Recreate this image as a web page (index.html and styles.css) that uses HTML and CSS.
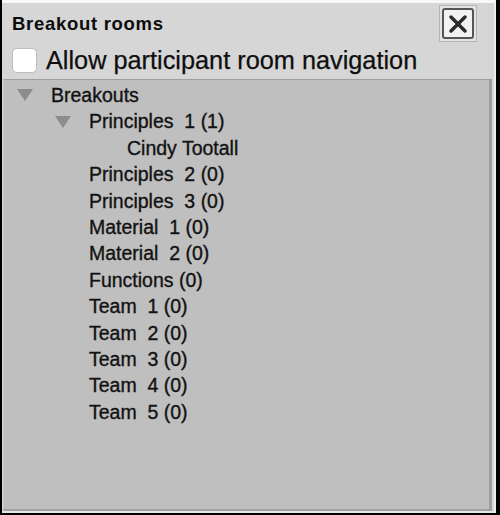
FILE: index.html
```html
<!DOCTYPE html>
<html>
<head>
<meta charset="utf-8">
<link rel="stylesheet" href="styles.css">
</head>
<body>
<div class="window">
  <div class="header">
    <div class="title">Breakout rooms</div>
    <div class="close-outer">
      <div class="close-inner">
        <svg width="18" height="18" viewBox="0 0 18 18"><path d="M2 2 L16 16 M16 2 L2 16" stroke="#2a2a2a" stroke-width="3.4" stroke-linecap="round" fill="none"/></svg>
      </div>
    </div>
  </div>
  <div class="check-row">
    <div class="checkbox"></div>
    <div class="check-label">Allow participant room navigation</div>
  </div>
  <div class="tree">
    <div class="row lvl0"><span class="toggle"><svg width="16" height="12" viewBox="0 0 16 12"><polygon points="0,0 16,0 8,12" fill="#8c8c8c"/></svg></span><span class="label">Breakouts</span></div>
    <div class="row lvl1"><span class="toggle"><svg width="16" height="12" viewBox="0 0 16 12"><polygon points="0,0 16,0 8,12" fill="#8c8c8c"/></svg></span><span class="label">Principles  1 (1)</span></div>
    <div class="row lvl2"><span class="toggle"></span><span class="label">Cindy Tootall</span></div>
    <div class="row lvl1"><span class="toggle"></span><span class="label">Principles  2 (0)</span></div>
    <div class="row lvl1"><span class="toggle"></span><span class="label">Principles  3 (0)</span></div>
    <div class="row lvl1"><span class="toggle"></span><span class="label">Material  1 (0)</span></div>
    <div class="row lvl1"><span class="toggle"></span><span class="label">Material  2 (0)</span></div>
    <div class="row lvl1"><span class="toggle"></span><span class="label">Functions (0)</span></div>
    <div class="row lvl1"><span class="toggle"></span><span class="label">Team  1 (0)</span></div>
    <div class="row lvl1"><span class="toggle"></span><span class="label">Team  2 (0)</span></div>
    <div class="row lvl1"><span class="toggle"></span><span class="label">Team  3 (0)</span></div>
    <div class="row lvl1"><span class="toggle"></span><span class="label">Team  4 (0)</span></div>
    <div class="row lvl1"><span class="toggle"></span><span class="label">Team  5 (0)</span></div>
  </div>
</div>
</body>
</html>
```
FILE: styles.css
```css
html, body {
  margin: 0;
  padding: 0;
  background: #000;
  height: 515px;
  overflow: hidden;
}
body {
  font-family: "Liberation Sans", Arial, sans-serif;
  color: #111;
}
.window {
  box-sizing: border-box;
  margin-left: 2px;
  width: 494px;
  height: 513px;
  background: #d6d6d6;
  border-top: 3px solid #f7f7f7;
  border-right: 2px solid #ededed;
  border-bottom: 2px solid #e8e8e8;
  display: flex;
  flex-direction: column;
}
.header {
  display: flex;
  justify-content: space-between;
  align-items: flex-start;
  padding: 2px 17px 0 10px;
  height: 39px;
  box-sizing: border-box;
}
.title {
  font-weight: bold;
  font-size: 18.5px;
  letter-spacing: 0.7px;
  line-height: 20px;
  margin-top: 9.4px;
  color: #0c0c0c;
}
.close-outer {
  box-sizing: border-box;
  width: 38px;
  height: 37px;
  border: 1px solid #b4b4b4;
  padding: 2px;
  background: #e4e4e4;
}
.close-inner {
  box-sizing: border-box;
  width: 100%;
  height: 100%;
  border: 2px solid #555;
  border-radius: 3px;
  background: #f2f2f2;
  display: flex;
  align-items: center;
  justify-content: center;
}
.close-inner svg {
  display: block;
  filter: blur(0.5px);
}
.check-row {
  height: 37px;
  display: flex;
  align-items: center;
  padding-left: 10px;
  gap: 9px;
}
.checkbox {
  box-sizing: border-box;
  width: 25px;
  height: 25px;
  background: #fff;
  border: 1px solid #bdbdbd;
  border-radius: 5px;
}
.check-label {
  font-size: 25.3px;
  color: #0e0e0e;
  -webkit-text-stroke: 0.25px #0e0e0e;
}
.tree {
  flex: 1;
  margin: 0 2px 0 1px;
  background: #bfbfbf;
  border-top: 1px solid #9e9e9e;
  border-left: 1px solid #c9c9c9;
  border-right: 3px solid #a0a0a0;
  border-bottom: 2px solid #a0a0a0;
  padding-top: 2px;
}
.row {
  display: flex;
  align-items: center;
  height: 26.4px;
  font-size: 19.5px;
  line-height: 26.4px;
  white-space: pre;
  color: #121212;
  -webkit-text-stroke: 0.35px #121212;
}
.lvl0 { padding-left: 13px; }
.lvl1 { padding-left: 51px; }
.lvl2 { padding-left: 89px; }
.toggle {
  width: 34px;
  flex: none;
  display: flex;
  align-items: center;
}
.toggle svg { display: block; }
```
